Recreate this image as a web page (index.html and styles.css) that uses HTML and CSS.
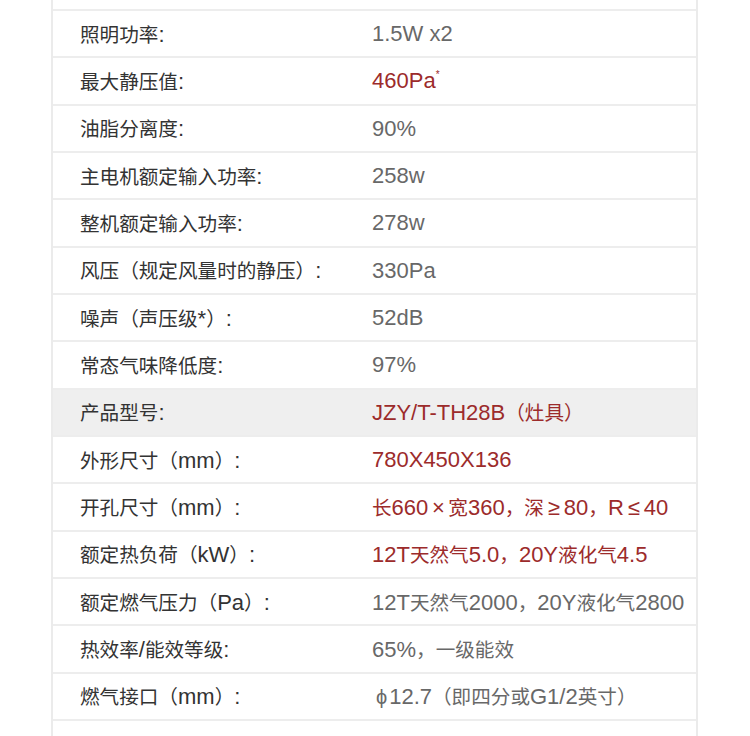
FILE: index.html
```html
<!DOCTYPE html>
<html lang="zh-CN">
<head>
<meta charset="utf-8">
<title>参数</title>
<link rel="stylesheet" href="styles.css">
</head>
<body>
<div class="spec">
  <div class="cap"></div>
  <div class="row"><div class="k"><span class="zh">照明功率</span>:</div><div class="v">1.5W x2</div></div>
  <div class="row"><div class="k"><span class="zh">最大静压值</span>:</div><div class="v red">460Pa<sup>*</sup></div></div>
  <div class="row"><div class="k"><span class="zh">油脂分离度</span>:</div><div class="v">90%</div></div>
  <div class="row"><div class="k"><span class="zh">主电机额定输入功率</span>:</div><div class="v">258w</div></div>
  <div class="row"><div class="k"><span class="zh">整机额定输入功率</span>:</div><div class="v">278w</div></div>
  <div class="row"><div class="k"><span class="zh">风压（规定风量时的静压）</span>:</div><div class="v">330Pa</div></div>
  <div class="row"><div class="k"><span class="zh">噪声（声压级</span>*<span class="zh">）</span>:</div><div class="v">52dB</div></div>
  <div class="row"><div class="k"><span class="zh">常态气味降低度</span>:</div><div class="v">97%</div></div>
  <div class="row head"><div class="k"><span class="zh">产品型号</span>:</div><div class="v red">JZY/T-TH28B<span class="zh">（灶具）</span></div></div>
  <div class="row"><div class="k"><span class="zh">外形尺寸（</span>mm<span class="zh">）</span>:</div><div class="v red">780X450X136</div></div>
  <div class="row"><div class="k"><span class="zh">开孔尺寸（</span>mm<span class="zh">）</span>:</div><div class="v red"><span class="zh">长</span>660<span class="sym">×</span><span class="zh">宽</span>360<span class="zh">，深</span><span class="sym">≥</span>80<span class="zh">，</span>R<span class="sym">≤</span>40</div></div>
  <div class="row"><div class="k"><span class="zh">额定热负荷（</span>kW<span class="zh">）</span>:</div><div class="v red">12T<span class="zh">天然气</span>5.0<span class="zh">，</span>20Y<span class="zh">液化气</span>4.5</div></div>
  <div class="row"><div class="k"><span class="zh">额定燃气压力（</span>Pa<span class="zh">）</span>:</div><div class="v">12T<span class="zh">天然气</span>2000<span class="zh">，</span>20Y<span class="zh">液化气</span>2800</div></div>
  <div class="row"><div class="k"><span class="zh">热效率</span>/<span class="zh">能效等级</span>:</div><div class="v">65%<span class="zh">，一级能效</span></div></div>
  <div class="row"><div class="k"><span class="zh">燃气接口（</span>mm<span class="zh">）</span>:</div><div class="v"><span class="phi">ϕ</span>12.7<span class="zh">（即四分或</span>G1/2<span class="zh">英寸）</span></div></div>
  <div class="row"></div>
</div>
</body>
</html>
```
FILE: styles.css
```css
html, body {
  margin: 0;
  padding: 0;
  background: #ffffff;
}
body {
  font-family: "Liberation Sans", "Noto Sans CJK SC", sans-serif;
}
.spec {
  margin-left: 51px;
  width: 647px;
  box-sizing: border-box;
  border-left: 2px solid #ebebeb;
  border-right: 2px solid #ebebeb;
  height: 736px;
  overflow: hidden;
}
.cap {
  height: 9px;
}
.row {
  box-sizing: border-box;
  height: 47.33px;
  border-top: 2px solid #ededed;
  display: grid;
  grid-template-columns: 319px 1fr;
  align-items: center;
}
.row.head {
  background: #efefef;
}
.k, .v {
  font-size: 22px;
  white-space: nowrap;
  line-height: 28px;
  padding-top: 1px;
}
.k {
  padding-left: 27px;
  color: #333333;
}
.v {
  color: #686868;
}
.v.red {
  color: #9c2b2b;
}
.zh {
  font-family: "Noto Sans CJK SC", sans-serif;
  font-size: 19.6px;
}
.sym {
  display: inline-block;
  width: 20px;
  text-align: center;
  font-size: 22px;
}
.v sup {
  font-size: 10px;
  vertical-align: 10px;
  line-height: 0;
}
.phi {
  display: inline-block;
  margin-left: 4px;
  margin-right: 2px;
  font-size: 20px;
}
```
